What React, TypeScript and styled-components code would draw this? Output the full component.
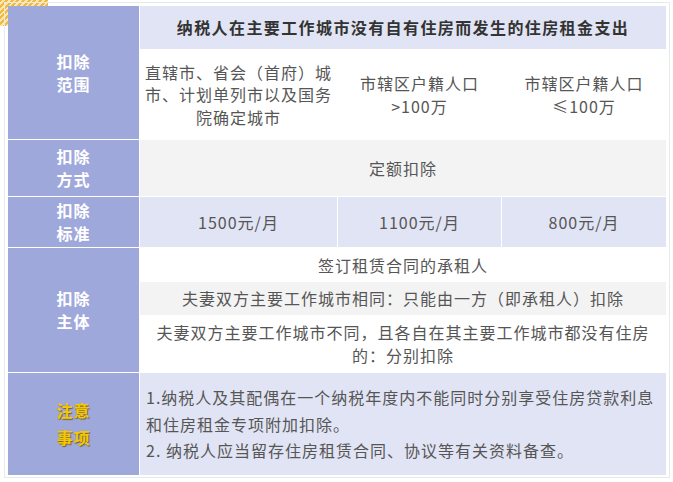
import React from "react";
import styled, { createGlobalStyle } from "styled-components";

const GlobalStyle = createGlobalStyle`
  html, body {
    margin: 0;
    padding: 0;
    background: #ffffff;
  }
  body {
    font-family: "Noto Sans CJK SC", "Noto Sans", sans-serif;
  }
`;

const Page = styled.div`
  position: relative;
  width: 673px;
  height: 482px;
  padding: 2px 0 0 4px;
  box-sizing: border-box;
`;

// striped corner tab behind the table
const CornerTab = styled.div`
  position: absolute;
  left: 0;
  top: 0;
  width: 48px;
  height: 26px;
  border-bottom-right-radius: 10px;
  background: repeating-linear-gradient(
    135deg,
    #f3b844 0 2px,
    #fde7b0 2px 4px
  );
`;

const Frame = styled.div`
  position: relative;
  width: 666px;
  height: 476px;
  box-sizing: border-box;
  border: 1px solid #e3ece8;
  padding: 3px 3px 2px 3px;
`;

const Table = styled.div`
  position: relative;
  z-index: 1;
  display: grid;
  grid-template-columns: 131px 197px 163px 164px;
  grid-template-rows: 43px 89px 56px 50px 124px 102px;
  gap: 1px;
  background: #ffffff;
`;

const Label = styled.div<{ $span?: number; $accent?: boolean }>`
  grid-column: 1;
  grid-row: span ${(p) => p.$span ?? 1};
  display: flex;
  align-items: center;
  justify-content: center;
  text-align: center;
  background: #9fa8db;
  font-size: 16px;
  font-weight: 700;
  letter-spacing: 1px;
  line-height: ${(p) => (p.$accent ? "27px" : "23px")};
  color: ${(p) => (p.$accent ? "#f7c700" : "#ffffff")};
  text-shadow: ${(p) => (p.$accent ? "1px 1px 1px #6e5f33" : "none")};
`;

const Cell = styled.div<{ $bg?: string; $wide?: boolean }>`
  grid-column: ${(p) => (p.$wide ? "span 3" : "auto")};
  display: flex;
  align-items: center;
  justify-content: center;
  text-align: center;
  background: ${(p) => p.$bg ?? "#ffffff"};
  color: #565656;
  font-size: 16px;
  letter-spacing: 1px;
  line-height: 22.5px;
  white-space: nowrap;
`;

const HeaderCell = styled(Cell)`
  color: #333333;
  font-weight: 700;
  letter-spacing: 1.4px;
`;

const SubjectStack = styled.div`
  grid-column: span 3;
  display: flex;
  flex-direction: column;
`;

const SubjectLine = styled(Cell)<{ $h: number }>`
  height: ${(p) => p.$h}px;
  flex: none;
`;

const Notes = styled.div`
  grid-column: span 3;
  display: flex;
  flex-direction: column;
  justify-content: center;
  padding-left: 6px;
  background: #e1e4f4;
  color: #565656;
  font-size: 16px;
  letter-spacing: 1px;
  line-height: 26.5px;
  white-space: nowrap;
`;

const LAV = "#e1e4f4";
const GREY = "#f3f3f3";

export default function App() {
  return (
    <Page>
      <GlobalStyle />
      <CornerTab />
      <Frame>
        <Table>
          <Label $span={2}>
            扣除
            <br />
            范围
          </Label>
          <HeaderCell $wide $bg={LAV}>
            纳税人在主要工作城市没有自有住房而发生的住房租金支出
          </HeaderCell>
          <Cell>
            直辖市、省会（首府）城
            <br />
            市、计划单列市以及国务
            <br />
            院确定城市
          </Cell>
          <Cell>
            市辖区户籍人口
            <br />
            &gt;100万
          </Cell>
          <Cell>
            市辖区户籍人口
            <br />
            ≤100万
          </Cell>

          <Label>
            扣除
            <br />
            方式
          </Label>
          <Cell $wide $bg={GREY}>
            定额扣除
          </Cell>

          <Label>
            扣除
            <br />
            标准
          </Label>
          <Cell $bg={LAV}>1500元/月</Cell>
          <Cell $bg={LAV}>1100元/月</Cell>
          <Cell $bg={LAV}>800元/月</Cell>

          <Label>
            扣除
            <br />
            主体
          </Label>
          <SubjectStack>
            <SubjectLine $h={34}>签订租赁合同的承租人</SubjectLine>
            <SubjectLine $h={33} $bg={GREY}>
              夫妻双方主要工作城市相同：只能由一方（即承租人）扣除
            </SubjectLine>
            <SubjectLine $h={57}>
              夫妻双方主要工作城市不同，且各自在其主要工作城市都没有住房
              <br />
              的：分别扣除
            </SubjectLine>
          </SubjectStack>

          <Label $accent>
            注意
            <br />
            事项
          </Label>
          <Notes>
            <span>1.纳税人及其配偶在一个纳税年度内不能同时分别享受住房贷款利息</span>
            <span>和住房租金专项附加扣除。</span>
            <span>2. 纳税人应当留存住房租赁合同、协议等有关资料备查。</span>
          </Notes>
        </Table>
      </Frame>
    </Page>
  );
}
